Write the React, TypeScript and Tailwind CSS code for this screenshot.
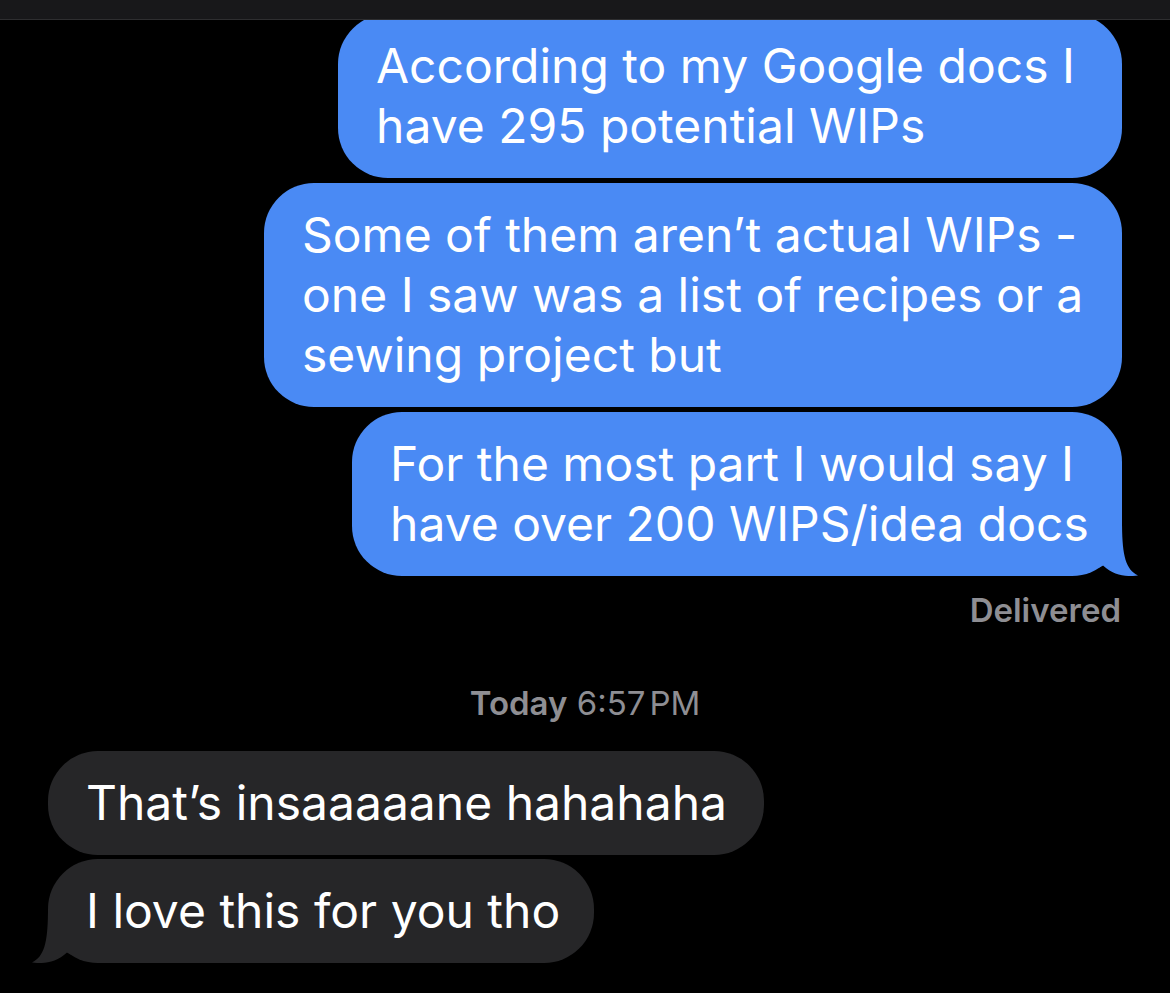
const sent = [
  { lines: ["According to my Google docs I", "have 295 potential WIPs"], w: "w-[784px]" },
  {
    lines: ["Some of them aren’t actual WIPs -", "one I saw was a list of recipes or a", "sewing project but"],
    w: "w-[858px]",
  },
  { lines: ["For the most part I would say I", "have over 200 WIPS/idea docs"], w: "w-[770px]", tail: true },
];

const received = [
  { lines: ["That’s insaaaaane hahahaha"], w: "w-[716px]" },
  { lines: ["I love this for you tho"], w: "w-[546px]", tail: true },
];

function Tail({ color, flip }: { color: string; flip?: boolean }) {
  return (
    <svg
      width="40"
      height="50"
      viewBox="0 0 40 50"
      className={`absolute bottom-0 ${flip ? "-left-[16px] -scale-x-100" : "-right-[16px]"}`}
    >
      <path d="M24 -6 C24 28 27 43 40 49.5 C30 51 16 50 5 39.5 L0 42 L0 -6 Z" fill={color} />
    </svg>
  );
}

function Bubble({ lines, w, tail, me }: { lines: string[]; w: string; tail?: boolean; me?: boolean }) {
  return (
    <div
      className={`relative ${w} rounded-[50px] px-[38px] py-[22px] text-[48px] leading-[60px] text-white whitespace-nowrap ${
        me ? "bg-[#4a8af4]" : "bg-[#262628]"
      }`}
    >
      {lines.map((l, i) => (
        <div key={i}>{l}</div>
      ))}
      {tail && <Tail color={me ? "#4a8af4" : "#262628"} flip={!me} />}
    </div>
  );
}

export default function App() {
  return (
    <div
      className="relative w-[1170px] h-[993px] bg-black overflow-hidden"
      style={{ fontFamily: "Inter, 'Noto Sans', sans-serif" }}
    >
      {/* status/nav bar remnant */}
      <div className="absolute top-0 left-0 right-0 h-[20px] bg-[#18181a] border-b border-[#2e2e30] z-10" />

      <div className="flex flex-col pt-[14px] px-[48px]">
        <div className="flex flex-col items-end gap-[5px]">
          {sent.map((m, i) => (
            <Bubble key={i} {...m} me />
          ))}
        </div>
        <div className="mt-[14px] text-right text-[33px] leading-[40px] font-semibold text-[#8e8e93] pr-[1px]">
          Delivered
        </div>

        <div className="mt-[53px] text-center text-[33px] leading-[40px] text-[#8e8e93]">
          <span className="font-semibold">Today</span> 6:57<span className="ml-[4px]">PM</span>
        </div>

        <div className="mt-[28px] flex flex-col items-start gap-[4px]">
          {received.map((m, i) => (
            <Bubble key={i} {...m} />
          ))}
        </div>
      </div>
    </div>
  );
}
